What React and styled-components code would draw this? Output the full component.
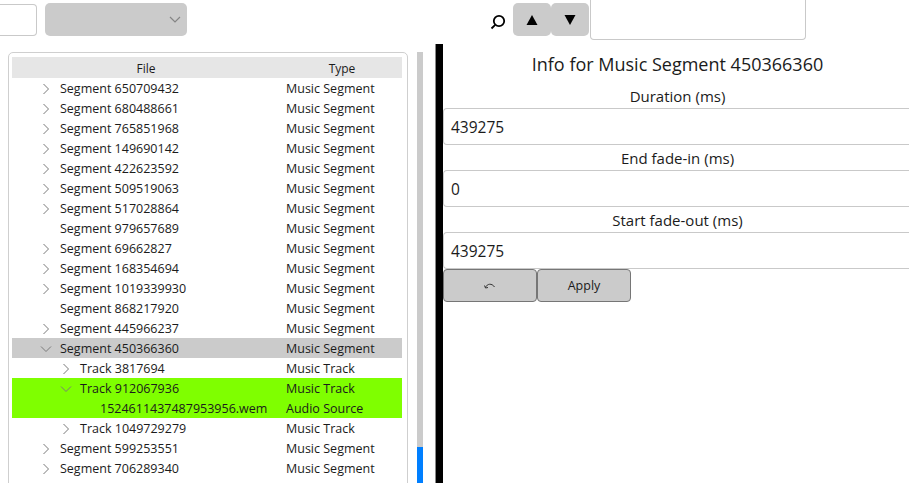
import React from 'react';
import styled, { createGlobalStyle } from 'styled-components';

const GlobalStyle = createGlobalStyle`
  html, body {
    margin: 0;
    padding: 0;
    height: 100%;
    overflow: hidden;
    background: #fff;
  }
  body {
    font-family: "Open Sans", "Noto Sans", "Liberation Sans", sans-serif;
    color: #1b1b1b;
  }
`;

const Page = styled.div`
  width: 909px;
  height: 483px;
  overflow: hidden;
  display: flex;
  flex-direction: column;
`;

const Toolbar = styled.div`
  height: 44px;
  flex: none;
  display: flex;
  align-items: flex-start;
`;

const LeftInput = styled.div`
  width: 36px;
  height: 30px;
  margin-top: 4px;
  border: 1px solid #c9c9c9;
  border-left: none;
  border-radius: 0 4px 4px 0;
`;

const Select = styled.div`
  width: 142px;
  height: 33px;
  margin: 3px 0 0 8px;
  background: #cbcbcb;
  border-radius: 5px;
  display: flex;
  align-items: center;
  justify-content: flex-end;
  padding-right: 2px;
  box-sizing: border-box;
`;

const SearchIcon = styled.svg`
  width: 16px;
  height: 16px;
  margin: 14px 7px 0 303px;
  flex: none;
`;

const ArrowButton = styled.div`
  width: 38px;
  height: 33px;
  margin-top: 3px;
  background: #cbcbcb;
  border-radius: 5px;
  display: flex;
  align-items: center;
  justify-content: center;
`;

const SearchInput = styled.div`
  width: 216px;
  height: 40px;
  margin-left: 1px;
  box-sizing: border-box;
  border: 1px solid #c9c9c9;
  border-top: none;
  border-radius: 0 0 4px 4px;
`;

const Main = styled.div`
  flex: 1;
  display: flex;
  min-height: 0;
`;

const LeftPane = styled.div`
  width: 435px;
  flex: none;
  display: flex;
  padding: 8px 0 0 8px;
  box-sizing: border-box;
`;

const TreeBox = styled.div`
  width: 400px;
  height: 460px;
  box-sizing: border-box;
  padding: 4px 5px 0 3px;
  border: 1px solid #cfcfcf;
  border-radius: 5px;
  flex: none;
  font-size: 12.5px;
`;

const Row = styled.div`
  display: grid;
  grid-template-columns: 270px 120px;
  height: 20px;
  line-height: 22px;
  background: ${(p) => p.$bg || 'transparent'};
`;

const HeaderRow = styled(Row)`
  height: 21px;
  line-height: 24px;
  background: #e6e6e6;
  font-size: 12px;
`;

const HeaderCell = styled.div`
  text-align: center;
  padding-right: ${(p) => p.$shift || 0}px;
`;

const NameCell = styled.div`
  display: flex;
  align-items: center;
  padding-left: ${(p) => 28 + p.$depth * 20}px;
  white-space: nowrap;
`;

const ChevronSlot = styled.span`
  width: 20px;
  flex: none;
  display: flex;
  align-items: center;
`;

const TypeCell = styled.div`
  padding-left: 4px;
  white-space: nowrap;
`;

const Scrollbar = styled.div`
  width: 6px;
  margin-left: 9px;
  flex: none;
  height: 431px;
  background: linear-gradient(#cbcbcb 0, #cbcbcb 395px, #007fff 395px);
`;

const Divider = styled.div`
  width: 8px;
  flex: none;
  box-sizing: border-box;
  background: #000;
  border-left: 1px solid #8a8a8a;
`;

const InfoPane = styled.div`
  flex: 1;
  min-width: 0;
  display: flex;
  flex-direction: column;
`;

const Title = styled.div`
  height: 42px;
  line-height: 41px;
  padding-left: 3px;
  text-align: center;
  font-size: 18px;
`;

const Field = styled.div`
  & + & {
    margin-top: 3px;
  }
`;

const FieldLabel = styled.div`
  height: 22px;
  line-height: 20px;
  padding-left: 3px;
  text-align: center;
  font-size: 15px;
`;

const FieldValue = styled.div`
  height: 37px;
  box-sizing: border-box;
  padding-left: 7px;
  line-height: 36px;
  font-size: 15.5px;
  border: 1px solid #c9c9c9;
  border-right: none;
  border-radius: 4px 0 0 4px;
`;

const ButtonRow = styled.div`
  display: flex;
`;

const ActionButton = styled.div`
  width: 94px;
  height: 33px;
  box-sizing: border-box;
  background: #cbcbcb;
  border: 1px solid #767676;
  border-radius: 4px;
  display: flex;
  align-items: center;
  justify-content: center;
  font-size: 12.5px;
`;

const Chevron = ({ open }) => (
  <svg width="12" height="12" viewBox="0 0 12 12" fill="none" stroke="#7a7a7a" strokeWidth="1">
    {open ? <polyline points="1,3.5 6,8.5 11,3.5" /> : <polyline points="3.5,1 8.5,6 3.5,11" />}
  </svg>
);

const segment = 'Music Segment';
const track = 'Music Track';

const rows = [
  { name: 'Segment 650709432', type: segment, arrow: 'closed' },
  { name: 'Segment 680488661', type: segment, arrow: 'closed' },
  { name: 'Segment 765851968', type: segment, arrow: 'closed' },
  { name: 'Segment 149690142', type: segment, arrow: 'closed' },
  { name: 'Segment 422623592', type: segment, arrow: 'closed' },
  { name: 'Segment 509519063', type: segment, arrow: 'closed' },
  { name: 'Segment 517028864', type: segment, arrow: 'closed' },
  { name: 'Segment 979657689', type: segment },
  { name: 'Segment 69662827', type: segment, arrow: 'closed' },
  { name: 'Segment 168354694', type: segment, arrow: 'closed' },
  { name: 'Segment 1019339930', type: segment, arrow: 'closed' },
  { name: 'Segment 868217920', type: segment },
  { name: 'Segment 445966237', type: segment, arrow: 'closed' },
  { name: 'Segment 450366360', type: segment, arrow: 'open', bg: '#cbcbcb' },
  { name: 'Track 3817694', type: track, arrow: 'closed', depth: 1 },
  { name: 'Track 912067936', type: track, arrow: 'open', depth: 1, bg: '#7fff00' },
  { name: '1524611437487953956.wem', type: 'Audio Source', depth: 2, bg: '#7fff00' },
  { name: 'Track 1049729279', type: track, arrow: 'closed', depth: 1 },
  { name: 'Segment 599253551', type: segment, arrow: 'closed' },
  { name: 'Segment 706289340', type: segment, arrow: 'closed' },
];

const fields = [
  { label: 'Duration (ms)', value: '439275' },
  { label: 'End fade-in (ms)', value: '0' },
  { label: 'Start fade-out (ms)', value: '439275' },
];

function App() {
  return (
    <Page>
      <GlobalStyle />
      <Toolbar>
        <LeftInput />
        <Select>
          <svg width="20" height="12" viewBox="0 0 20 12" fill="none" stroke="#858585" strokeWidth="1.2">
            <polyline points="5,3 10,8 15,3" />
          </svg>
        </Select>
        <SearchIcon viewBox="0 0 16 16" fill="none" stroke="#000" strokeWidth="1.8">
          <circle cx="9" cy="7" r="5.2" />
          <line x1="5.2" y1="10.8" x2="1.5" y2="14.5" />
        </SearchIcon>
        <ArrowButton>
          <svg width="12" height="10" viewBox="0 0 12 10"><polygon points="6,0 11.5,10 0.5,10" fill="#000" /></svg>
        </ArrowButton>
        <ArrowButton>
          <svg width="12" height="10" viewBox="0 0 12 10"><polygon points="0.5,0 11.5,0 6,10" fill="#000" /></svg>
        </ArrowButton>
        <SearchInput />
      </Toolbar>
      <Main>
        <LeftPane>
          <TreeBox>
            <HeaderRow>
              <HeaderCell $shift={2}>File</HeaderCell>
              <HeaderCell>Type</HeaderCell>
            </HeaderRow>
            {rows.map((r) => (
              <Row key={r.name} $bg={r.bg}>
                <NameCell $depth={r.depth || 0}>
                  <ChevronSlot>{r.arrow && <Chevron open={r.arrow === 'open'} />}</ChevronSlot>
                  {r.name}
                </NameCell>
                <TypeCell>{r.type}</TypeCell>
              </Row>
            ))}
          </TreeBox>
          <Scrollbar />
        </LeftPane>
        <Divider />
        <InfoPane>
          <Title>Info for Music Segment 450366360</Title>
          {fields.map((f) => (
            <Field key={f.label}>
              <FieldLabel>{f.label}</FieldLabel>
              <FieldValue>{f.value}</FieldValue>
            </Field>
          ))}
          <ButtonRow>
            <ActionButton>
              <svg width="14" height="8" viewBox="0 0 14 8" fill="none" stroke="#333" strokeWidth="1">
                <path d="M2.5 5.5 C4 1.5, 9 1, 11.5 5" />
                <polyline points="1.5,3.5 2.5,6 5,5.5" />
              </svg>
            </ActionButton>
            <ActionButton>Apply</ActionButton>
          </ButtonRow>
        </InfoPane>
      </Main>
    </Page>
  );
}

export default App;
